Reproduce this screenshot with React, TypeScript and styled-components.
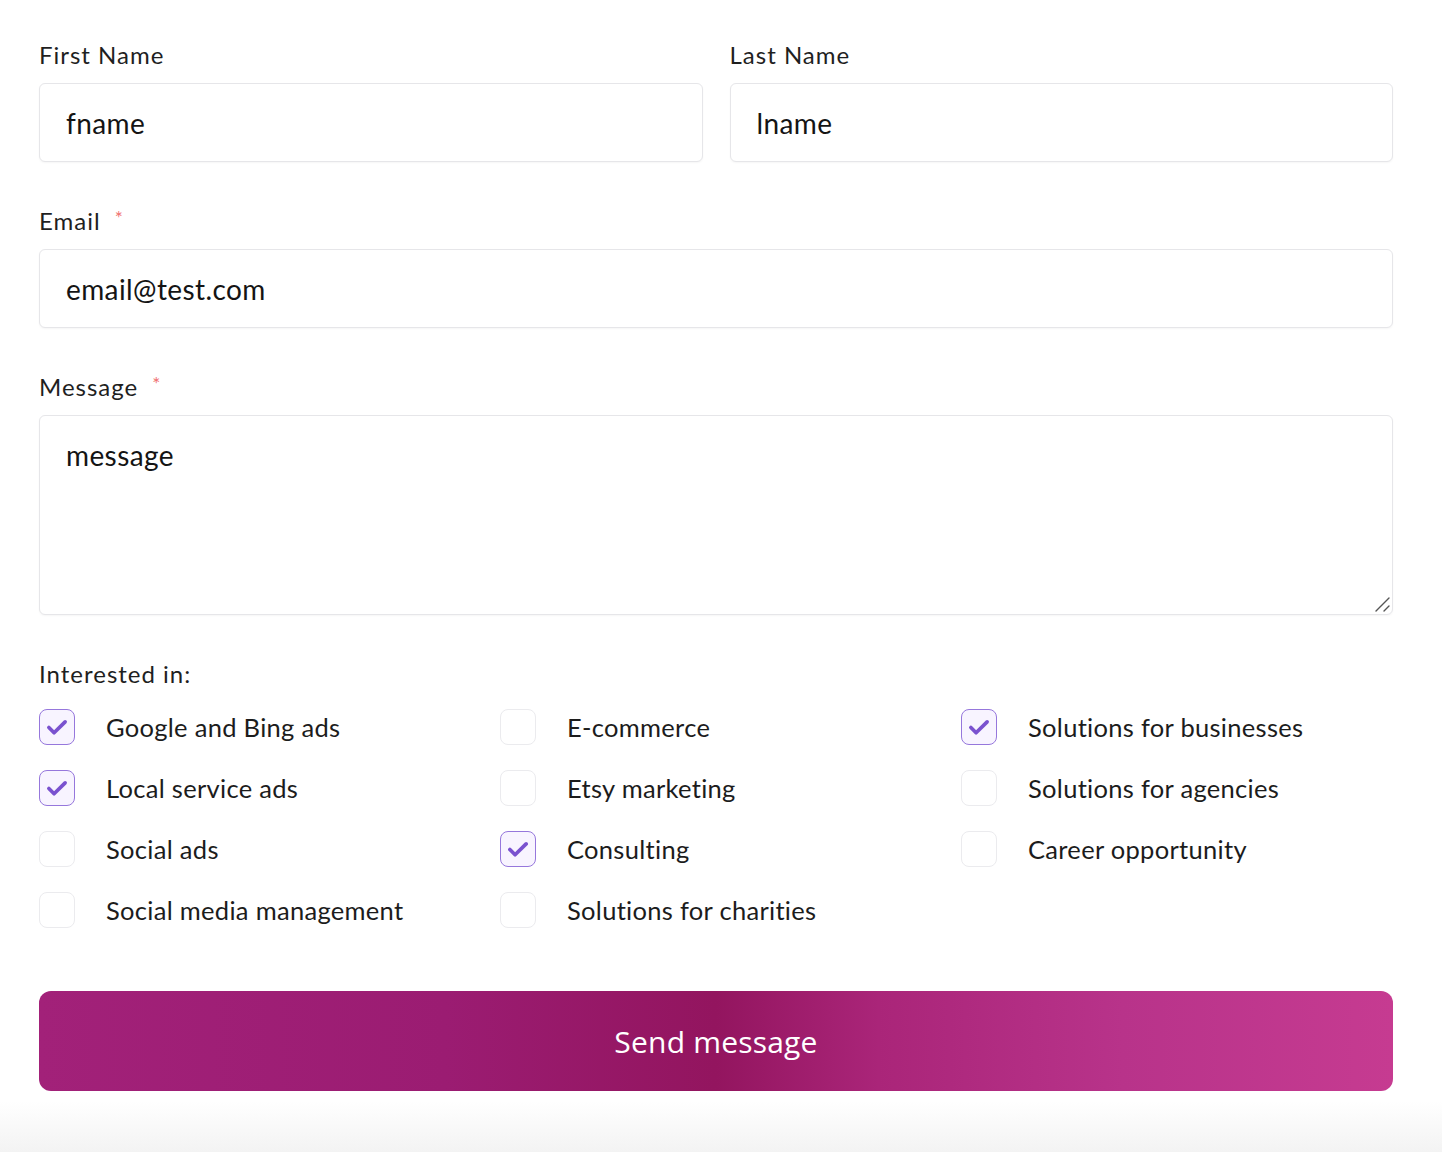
import React from "react";
import styled, { createGlobalStyle } from "styled-components";

const Global = createGlobalStyle`
  html, body { margin: 0; padding: 0; background: #fff; }
  body { font-family: "Lato", "Open Sans", sans-serif; color: #1a1a1a; }
  * { box-sizing: border-box; }
`;

const Page = styled.div`
  width: 1442px;
  min-height: 1152px;
  display: flex;
  flex-direction: column;
  background: #fff;
`;

const Form = styled.form`
  display: flex;
  flex-direction: column;
  gap: 44px;
  padding: 40px 49px 0 39px;
`;

const Row = styled.div`
  display: grid;
  grid-template-columns: 1fr 1fr;
  gap: 27px;
`;

const Field = styled.div`
  display: flex;
  flex-direction: column;
  gap: 13px;
`;

const Label = styled.label`
  font-size: 24px;
  line-height: 30px;
  height: 30px;
  color: #1f1f1f;
  letter-spacing: 1px;
  display: flex;
  align-items: center;
`;

const Star = styled.span`
  color: #f07070;
  font-size: 19px;
  line-height: 19px;
  margin-left: 14px;
  align-self: flex-start;
  margin-top: 2px;
`;

const Input = styled.input`
  height: 79px;
  width: 100%;
  border: 1px solid #e6e6e9;
  border-radius: 6px;
  padding: 0 26px;
  font-family: inherit;
  font-size: 28px;
  color: #141414;
  background: #fff;
  box-shadow: 0 1px 2px rgba(0, 0, 0, 0.04);
  outline: none;
  letter-spacing: 0.4px;
`;

const AreaWrap = styled.div`
  position: relative;
  height: 200px;
`;

const TextArea = styled.textarea`
  display: block;
  height: 200px;
  width: 100%;
  border: 1px solid #e6e6e9;
  border-radius: 6px;
  padding: 23px 26px;
  font-family: inherit;
  font-size: 28px;
  line-height: 32px;
  color: #141414;
  background: #fff;
  box-shadow: 0 1px 2px rgba(0, 0, 0, 0.04);
  outline: none;
  resize: none;
  letter-spacing: 0.4px;
`;

const Grip = styled.svg`
  position: absolute;
  right: 2px;
  bottom: 2px;
  pointer-events: none;
`;

const Interests = styled.div`
  display: flex;
  flex-direction: column;
  gap: 20px;
`;

const Options = styled.div`
  display: grid;
  grid-template-columns: repeat(3, 432px);
  column-gap: 29px;
  row-gap: 25px;
  grid-auto-flow: column;
  grid-template-rows: repeat(4, 36px);
`;

const Option = styled.label`
  display: flex;
  align-items: center;
  gap: 31px;
  height: 36px;
  font-size: 25.5px;
  color: #1c1c1c;
  letter-spacing: 0.3px;
  cursor: pointer;
`;

const Box = styled.span<{ $checked: boolean }>`
  width: 36px;
  height: 36px;
  flex: 0 0 36px;
  border-radius: 8px;
  border: ${(p) => (p.$checked ? "1.5px solid #9677dc" : "1px solid #ebebee")};
  background: ${(p) => (p.$checked ? "#f8f4ff" : "#fff")};
  display: flex;
  align-items: center;
  justify-content: center;
`;

const Button = styled.button`
  margin-top: 19px;
  height: 100px;
  width: 100%;
  border: none;
  border-radius: 12px;
  background: linear-gradient(
    90deg,
    #a22179 0%,
    #9b1c72 30%,
    #93155f 50%,
    #aa2579 62%,
    #b8338a 80%,
    #c63b91 100%
  );
  color: #fff;
  font-family: "Open Sans", "Lato", sans-serif;
  font-size: 30px;
  font-weight: 500;
  letter-spacing: 0.2px;
  cursor: pointer;
`;

const Fade = styled.div`
  flex: 1;
  margin-top: 10px;
  min-height: 51px;
  background: linear-gradient(180deg, #ffffff 0%, #f3f3f3 100%);
`;

const Check = () => (
  <svg width="26" height="26" viewBox="0 0 24 24" fill="none">
    <path
      d="M4.5 12.5l4.8 4.8L19.5 7.3"
      stroke="#7a52cf"
      strokeWidth="3.4"
      strokeLinecap="round"
      strokeLinejoin="round"
    />
  </svg>
);

const options: { label: string; checked: boolean }[] = [
  { label: "Google and Bing ads", checked: true },
  { label: "Local service ads", checked: true },
  { label: "Social ads", checked: false },
  { label: "Social media management", checked: false },
  { label: "E-commerce", checked: false },
  { label: "Etsy marketing", checked: false },
  { label: "Consulting", checked: true },
  { label: "Solutions for charities", checked: false },
  { label: "Solutions for businesses", checked: true },
  { label: "Solutions for agencies", checked: false },
  { label: "Career opportunity", checked: false },
];

export default function App() {
  return (
    <Page>
      <Global />
      <Form onSubmit={(e) => e.preventDefault()}>
        <Row>
          <Field>
            <Label>First Name</Label>
            <Input defaultValue="fname" />
          </Field>
          <Field>
            <Label>Last Name</Label>
            <Input defaultValue="lname" />
          </Field>
        </Row>
        <Field>
          <Label>
            Email<Star>*</Star>
          </Label>
          <Input defaultValue="email@test.com" />
        </Field>
        <Field>
          <Label>
            Message<Star>*</Star>
          </Label>
          <AreaWrap>
            <TextArea defaultValue="message" />
            <Grip width="18" height="18" viewBox="0 0 18 18">
              <path d="M3 16L16 3M11 16L16 11" stroke="#555" strokeWidth="1.4" strokeLinecap="round" />
            </Grip>
          </AreaWrap>
        </Field>
        <Interests>
          <Label>Interested in:</Label>
          <Options>
            {options.map((o) => (
              <Option key={o.label}>
                <Box $checked={o.checked}>{o.checked && <Check />}</Box>
                {o.label}
              </Option>
            ))}
          </Options>
        </Interests>
        <Button type="submit">Send message</Button>
      </Form>
      <Fade />
    </Page>
  );
}
